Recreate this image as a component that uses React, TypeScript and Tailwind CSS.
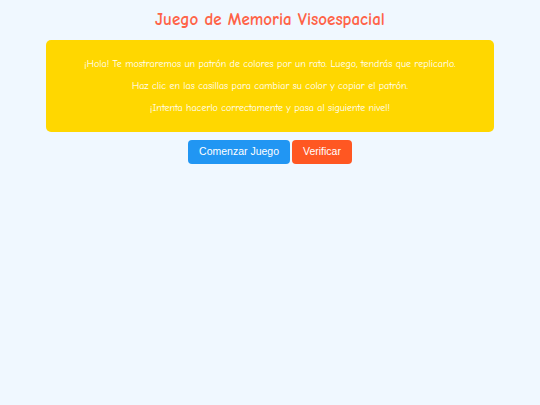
export default function App() {
  return (
    <div className="min-h-[405px] bg-[#f0f8ff] pt-[9px]">
      <h1 className="text-center text-[17px] font-bold leading-[22px] text-[#ff6347] [font-family:'Comic_Sans_MS','Comic_Neue',cursive]">
        Juego de Memoria Visoespacial
      </h1>
      <div className="mx-[46px] mt-[9px] rounded-[5px] bg-[#ffd700] px-[10px] pb-[13px] pt-[13px] text-center text-[10px] leading-[22px] text-white [font-family:'Comic_Sans_MS','Comic_Neue',cursive]">
        <p>¡Hola! Te mostraremos un patrón de colores por un rato. Luego, tendrás que replicarlo.</p>
        <p>Haz clic en las casillas para cambiar su color y copiar el patrón.</p>
        <p>¡Intenta hacerlo correctamente y pasa al siguiente nivel!</p>
      </div>
      <div className="mt-[8px] flex justify-center gap-[2px] [font-family:'Liberation_Sans',Arial,sans-serif]">
        <button className="h-[24px] rounded-[4px] bg-[#2196f3] px-[11px] text-[10.5px] text-white">Comenzar Juego</button>
        <button className="h-[24px] rounded-[4px] bg-[#ff5722] px-[11px] text-[10.5px] text-white">Verificar</button>
      </div>
    </div>
  );
}
